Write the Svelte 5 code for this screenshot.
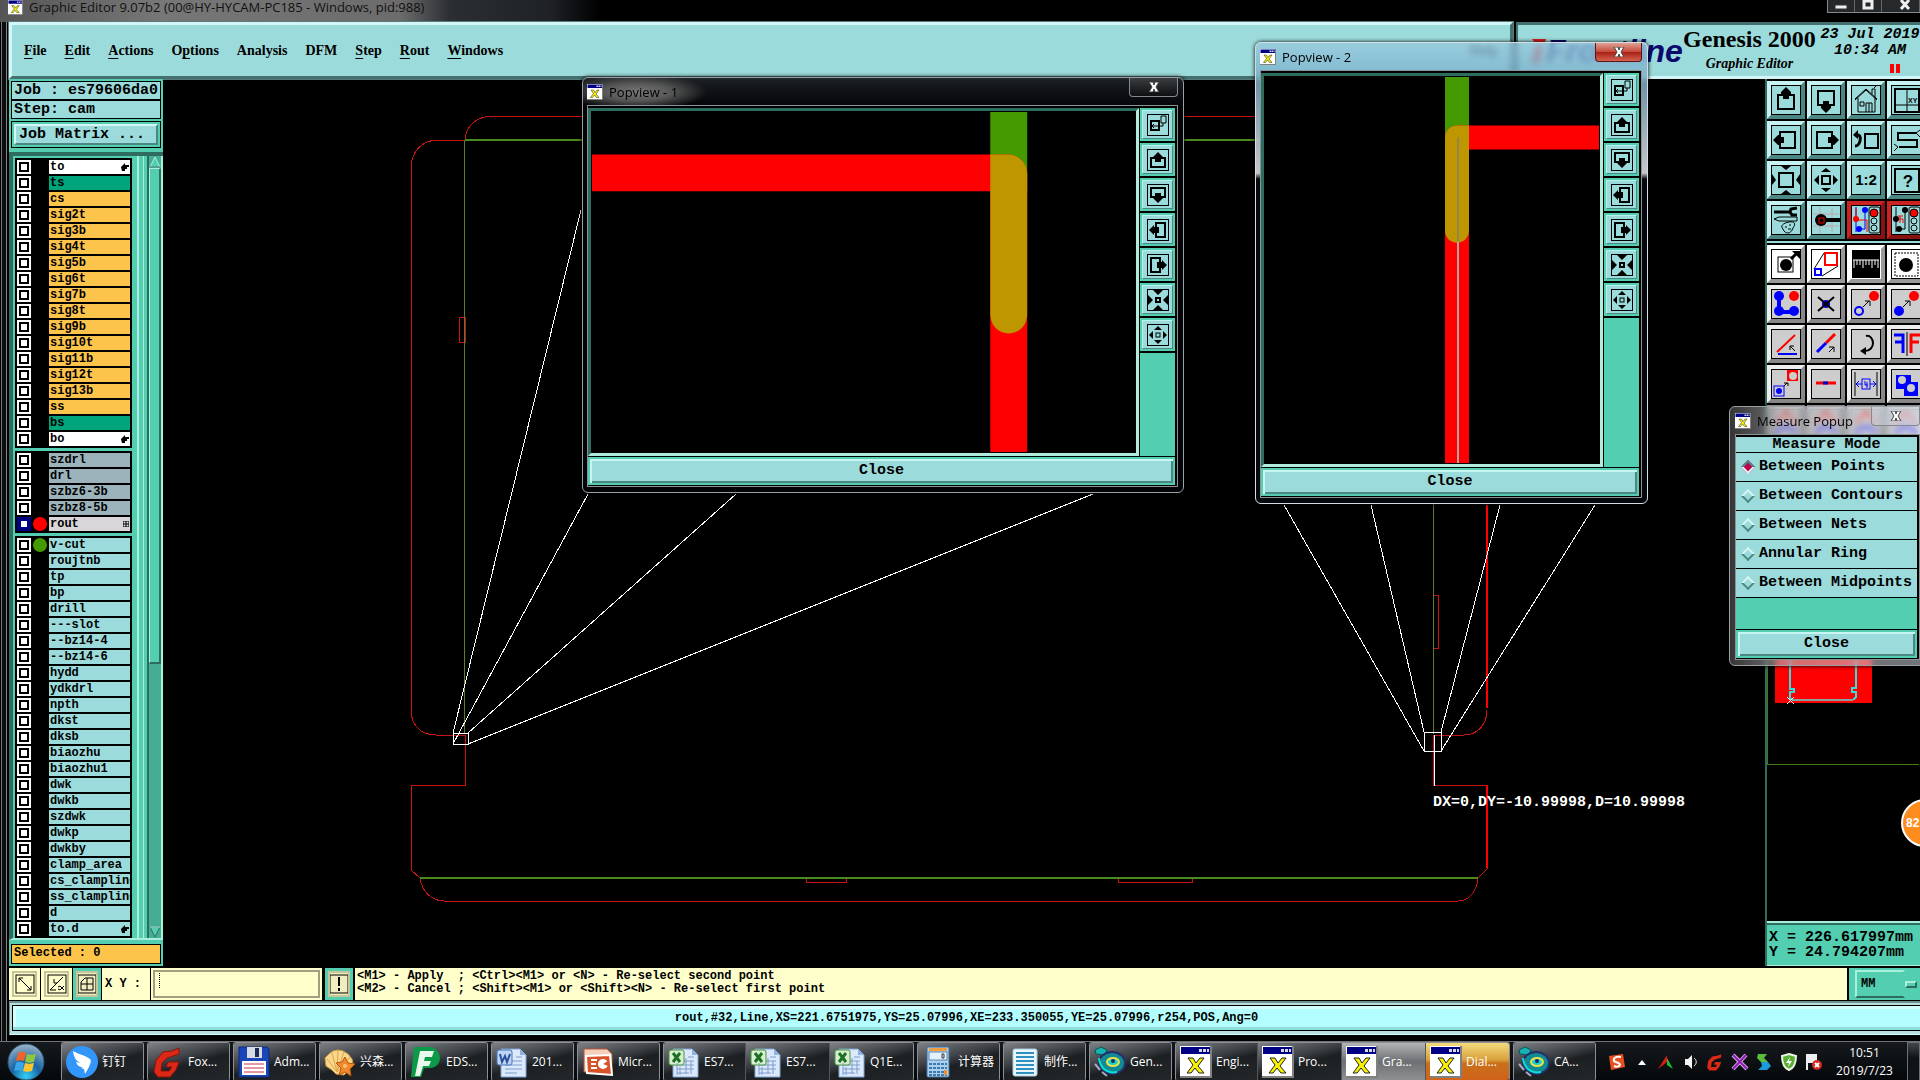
<script>
    let coords = $state('');
    let unit = $state('MM');
    let measureMode = $state('Between Points');

    const menus = [
        ['', 'F', 'ile'],
        ['', 'E', 'dit'],
        ['', 'A', 'ctions'],
        ['O', 'p', 'tions'],
        ['Analysis', '', ''],
        ['DFM', '', ''],
        ['', 'S', 'tep'],
        ['', 'R', 'out'],
        ['', 'W', 'indows']
    ];

    const layer = (kind) => (name) => ({ name, kind });

    const layerGroups = $state([
        [
            { name: 'to', kind: 'silk', mark: 'hand' },
            { name: 'ts', kind: 'mask' },
            ...['cs', 'sig2t', 'sig3b', 'sig4t', 'sig5b', 'sig6t', 'sig7b', 'sig8t', 'sig9b', 'sig10t', 'sig11b', 'sig12t', 'sig13b', 'ss'].map(layer('signal')),
            { name: 'bs', kind: 'mask' },
            { name: 'bo', kind: 'silk', mark: 'hand' }
        ],
        [
            ...['szdrl', 'drl', 'szbz6-3b', 'szbz8-5b'].map(layer('drill')),
            { name: 'rout', kind: 'rout', color: 'red', mark: 'grid', active: true }
        ],
        [
            { name: 'v-cut', kind: 'misc', color: 'green' },
            ...['roujtnb', 'tp', 'bp', 'drill', '---slot', '--bz14-4', '--bz14-6', 'hydd', 'ydkdrl', 'npth', 'dkst', 'dksb', 'biaozhu', 'biaozhu1', 'dwk', 'dwkb', 'szdwk', 'dwkp', 'dwkby', 'clamp_area', 'cs_clampline', 'ss_clampline', 'd'].map(layer('misc')),
            { name: 'to.d', kind: 'misc', mark: 'hand' }
        ]
    ]);

    const viewTools = ['up', 'down', 'home', 'layout', 'left', 'right', 'previous', 'serpent', 'zoomin', 'zoomout', 'scale', 'help', 'setup', 'magnify', 'netsred', 'netsblack'];
    const editTools = ['select', 'resize', 'ruler', 'area', 'net', 'remove', 'copy', 'move', 'angle', 'extend', 'rotate', 'mirror', 'swap', 'segment', 'gap', 'merge', 'arcs', 'arcs', 'arcs', 'arcs'];
    const popTools = ['popview', 'up', 'down', 'left', 'right', 'zoomin', 'zoomout'];

    const measureModes = ['Between Points', 'Between Contours', 'Between Nets', 'Annular Ring', 'Between Midpoints'];

    const tasks = [
        [{ icon: 'ding', text: '钉钉' }],
        [{ icon: 'fox', text: 'Fox...' }],
        [{ icon: 'floppy', text: 'Adm...' }],
        [{ icon: 'shell', text: '兴森...' }],
        [{ icon: 'eds', text: 'EDS...' }],
        [{ icon: 'word', text: '201...' }],
        [{ icon: 'ppt', text: 'Micr...' }],
        [{ icon: 'excel', text: 'ES7...' }, { icon: 'excel', text: 'ES7...' }, { icon: 'excel', text: 'Q1E...' }],
        [{ icon: 'calc', text: '计算器' }],
        [{ icon: 'notes', text: '制作...' }],
        [{ icon: 'gen', text: 'Gen...' }],
        [{ icon: 'x', text: 'Engi...' }, { icon: 'x', text: 'Pro...' }, { icon: 'x', text: 'Gra...', state: 'current' }, { icon: 'x', text: 'Dial...', state: 'alert' }],
        [{ icon: 'gen', text: 'CA...' }]
    ];
</script>

{#snippet xIcon(size)}
    <svg class="x-icon" width={size} height={size} viewBox="0 0 32 32" aria-hidden="true">
        <rect width="32" height="32" fill="#808080" />
        <rect x="0" y="0" width="30" height="30" fill="#fff" />
        <rect x="1" y="1" width="29" height="7" fill="#000084" />
        <path d="M19 3h3v3h-3zM23 3h3v3h-3zM27 3h2v3h-2z" fill="#d8d8e8" />
        <path d="M8 12h5l3 5 4-5h4l-6 8 6 7h-5l-4-5-4 5H7l6-8z" fill="#f7f100" stroke="#222" stroke-width="1" />
    </svg>
{/snippet}

{#snippet toolIcon(kind)}
    <svg width="30" height="30" viewBox="0 0 30 30" fill="none" stroke="#000" stroke-width="2" aria-hidden="true">
        {#if kind === 'up'}
            <rect x="7" y="10" width="16" height="14" />
            <path d="M15 2l5 5v2h-2v5h-6V9h-2V7z" fill="#000" stroke="none" />
        {:else if kind === 'down'}
            <rect x="7" y="6" width="16" height="14" />
            <path d="M15 28l5-5v-2h-2v-5h-6v5h-2v2z" fill="#000" stroke="none" />
        {:else if kind === 'left'}
            <rect x="9" y="7" width="15" height="16" />
            <path d="M2 15l5-5h2v2h4v6H9v2H7z" fill="#000" stroke="none" />
        {:else if kind === 'right'}
            <rect x="6" y="7" width="15" height="16" />
            <path d="M28 15l-5-5h-2v2h-4v6h4v2h2z" fill="#000" stroke="none" />
        {:else if kind === 'home'}
            <path d="M4 15L15 5l11 10M7 13v14h17V13" stroke-width="1" />
            <path d="M4 14L15 4l11 10" stroke-width="1" />
            <path d="M9 17h4v4H9zM15 27v-9h6v9M18 18v9M21 9V4h3v8M23 3l3-3" stroke-width="1" />
        {:else if kind === 'layout'}
            <rect x="4" y="4" width="24" height="23" />
            <path d="M16 4v23M4 20h24" stroke-width="1" />
            <text x="17" y="18" font-size="7" font-family="Liberation Sans" fill="#000" stroke="none">XY</text>
        {:else if kind === 'previous'}
            <rect x="14" y="9" width="13" height="14" />
            <path d="M4 10c5-1 6 2 5 6s-3 5-5 5" stroke-width="3" />
            <path d="M2 10l5-5v9z" fill="#000" stroke="none" />
        {:else if kind === 'serpent'}
            <path d="M25 8H7v7h19v7H8" />
            <path d="M25 8l4-3M25 8l4 4M7 22l-4-3M7 22l-4 4" stroke-width="1" />
        {:else if kind === 'zoomin'}
            <rect x="8" y="8" width="14" height="14" />
            <path d="M10 1h10l-5 4zM10 29h10l-5-4zM1 9v11l4-5zM29 9v11l-4-5z" fill="#000" stroke="none" />
        {:else if kind === 'zoomout'}
            <rect x="11" y="11" width="8" height="8" />
            <path d="M10 7h10l-5-4zM10 23h10l-5 4zM8 10v10l-5-5zM22 10v10l5-5z" fill="#000" stroke="none" />
        {:else if kind === 'scale'}
            <text x="15" y="20" font-size="15" font-weight="bold" font-family="Liberation Sans" text-anchor="middle" fill="#000" stroke="none">1:2</text>
        {:else if kind === 'help'}
            <rect x="4" y="4" width="24" height="23" />
            <text x="17" y="22" font-size="17" font-weight="bold" font-family="Liberation Sans" text-anchor="middle" fill="#000" stroke="none">?</text>
        {:else if kind === 'setup'}
            <path d="M3 7h16M26 3l-6 1-1 3 2 3 5 0" stroke-width="3" />
            <path d="M3 14l5-2h18v4H8zM12 24c-3-3 0-6 6-7s7 2 4 6c-1 3-3 5-5 5s-4-1-5-4zM14 22h2M18 20h2M20 24h-3" stroke-width="1" />
        {:else if kind === 'magnify'}
            <path d="M9 2v26M21 2v26M2 9h26M2 21h26" stroke="#c4a3a8" stroke-width="1" />
            <circle cx="10" cy="15" r="6" fill="#000" stroke="none" />
            <path d="M15 15h14" stroke-width="4" />
            <rect x="8" y="13" width="5" height="5" stroke="#e00" stroke-width="1" />
        {:else if kind === 'netsred' || kind === 'netsblack'}
            <path d="M5 2v25M14 5v19h-5" stroke={kind === 'netsred' ? '#00f' : '#000'} stroke-width="1" />
            <path d={kind === 'netsred' ? 'M5 3v12h11v12' : 'M7 14h5v4M7 11h5M9 11v7'} stroke="red" stroke-width="1" />
            <circle cx="14" cy="5" r="3" fill={kind === 'netsred' ? '#00f' : '#000'} stroke="none" />
            <circle cx="8" cy="24" r="3" fill={kind === 'netsred' ? '#00f' : '#000'} stroke="none" />
            <circle cx="5" cy="14" r="3" fill={kind === 'netsred' ? 'red' : '#000'} stroke="none" />
            <rect x="18" y="2" width="11" height="26" rx="2" stroke-width="1" />
            <circle cx="23" cy="8" r="4" fill="red" stroke-width="1" />
            <circle cx="23" cy="16" r="3" stroke-width="1" />
            <circle cx="23" cy="23" r="3" stroke-width="1" />
        {:else if kind === 'select'}
            <rect x="7" y="8" width="15" height="15" stroke-width="1" />
            <circle cx="15" cy="16" r="6" fill="#000" stroke="none" />
            <path d="M20 10l6-6" stroke-width="3" />
            <path d="M21 2h8v8z" fill="#000" stroke="none" />
        {:else if kind === 'resize'}
            <path d="M3 20L13 4M11 27l16-10M3 20" stroke-width="1" />
            <rect x="14" y="4" width="12" height="12" stroke="red" />
            <rect x="4" y="20" width="6" height="6" stroke="#00f" />
        {:else if kind === 'ruler'}
            <rect x="1" y="1" width="28" height="28" fill="#000" stroke="none" />
            <path d="M3 11v8M6 11v5M9 11v5M12 11v8M15 11v5M18 11v5M21 11v8M24 11v5M27 11v8M2 11h26" stroke="#fff" stroke-width="1" />
        {:else if kind === 'area'}
            <rect x="4" y="4" width="23" height="23" stroke-width="1" stroke-dasharray="2 1" />
            <circle cx="15" cy="16" r="7" fill="#000" stroke="none" />
        {:else if kind === 'net'}
            <path d="M8 7v16h15" stroke="#00f" stroke-width="4" />
            <circle cx="8" cy="7" r="5" fill="#00f" stroke="none" />
            <circle cx="8" cy="22" r="5" fill="#00f" stroke="none" />
            <circle cx="23" cy="22" r="5" fill="#00f" stroke="none" />
            <circle cx="23" cy="7" r="5" fill="red" stroke="none" />
        {:else if kind === 'remove'}
            <circle cx="15" cy="15" r="4" fill="#00c" stroke="none" />
            <path d="M7 8l16 14M23 8L7 22" />
        {:else if kind === 'copy' || kind === 'move'}
            <circle cx="8" cy="22" r="4" fill={kind === 'move' ? '#00f' : 'none'} stroke="#00f" />
            <circle cx="23" cy="7" r="5" fill="red" stroke="none" />
            <path d="M12 18l6-6M14 12h5v5" stroke-width="1" />
        {:else if kind === 'angle'}
            <path d="M6 23L24 6" stroke="red" />
            <path d="M7 25h19" stroke="#00f" />
            <path d="M19 17l5 5M19 21v-4h4" stroke-width="1" />
        {:else if kind === 'extend'}
            <path d="M15 14l9-9" stroke="red" stroke-width="3" />
            <path d="M6 23l9-9" stroke="#00f" stroke-width="3" />
            <path d="M18 23l5-5M18 18h5v5" stroke-width="1" />
        {:else if kind === 'rotate'}
            <path d="M15 7c4-1 7 3 7 7s-3 8-8 8" />
            <path d="M9 22l6-4v8z" fill="#000" stroke="none" />
        {:else if kind === 'mirror'}
            <path d="M16 3v24" stroke-width="1" />
            <path d="M3 6h9v18M4 13h8" stroke="#00f" stroke-width="3" />
            <path d="M29 6h-9v18M28 13h-8" stroke="red" stroke-width="3" />
        {:else if kind === 'swap'}
            <rect x="16" y="1" width="11" height="11" fill="red" stroke="none" />
            <circle cx="22" cy="7" r="4" fill="#ccc" stroke="none" />
            <rect x="3" y="17" width="10" height="10" stroke="#00f" stroke-width="1" />
            <circle cx="8" cy="22" r="3" fill="#00f" stroke="none" />
            <path d="M13 17l3-3M13 14h4v3" stroke-width="1" />
        {:else if kind === 'segment'}
            <path d="M5 14h20" stroke="red" stroke-width="3" />
            <path d="M12 14h5" stroke="#00c" stroke-width="3" />
        {:else if kind === 'gap'}
            <path d="M4 3v24M26 3v24" stroke-width="1" />
            <path d="M5 15h20M8 12l-3 3 3 3M22 12l3 3-3 3" stroke="#00f" stroke-width="1" />
            <rect x="11" y="10" width="8" height="10" fill="#ccc" stroke="#00f" stroke-width="1" />
            <path d="M14 12v4h3M16 13v6" stroke="#00f" stroke-width="1" />
        {:else if kind === 'merge'}
            <path d="M5 6h15v7h7v14H13v-7H5z" fill="#00f" stroke="none" />
            <circle cx="11" cy="11" r="4" fill="#ccc" stroke="none" />
            <circle cx="20" cy="19" r="4" fill="#ccc" stroke="none" />
        {:else if kind === 'arcs'}
            <path d="M5 14l10-11 10 11" stroke="red" stroke-width="3" />
            <path d="M5 24c6-8 14-8 20 0" stroke="#00f" stroke-width="4" />
        {/if}
        {#if kind !== 'ruler'}
            <rect x="0" y="0" width="30" height="30" stroke-width="2" />
        {/if}
    </svg>
{/snippet}

{#snippet popIcon(kind)}
    <svg width="22" height="22" viewBox="0 0 22 22" fill="none" stroke="#000" stroke-width="2" aria-hidden="true">
        {#if kind === 'popview'}
            <rect x="4" y="7" width="8" height="9" />
            <path d="M14 2h5v7h-5zM16 9v3H5M7 10l-2 2 2 2" stroke-width="1" />
        {:else if kind === 'up'}
            <path d="M8 9H4v9h14V9h-4" />
            <path d="M11 3l5 5h-2v5H8V8H6z" fill="#000" stroke="none" />
        {:else if kind === 'down'}
            <path d="M8 13H4V4h14v9h-4" />
            <path d="M11 19l5-5h-2V9H8v5H6z" fill="#000" stroke="none" />
        {:else if kind === 'left'}
            <path d="M9 8V4h9v14H9v-4" />
            <path d="M2 11l5-5v2h5v6H7v2z" fill="#000" stroke="none" />
        {:else if kind === 'right'}
            <path d="M13 8V4H4v14h9v-4" />
            <path d="M20 11l-5-5v2h-5v6h5v2z" fill="#000" stroke="none" />
        {:else if kind === 'zoomin'}
            <rect x="9" y="9" width="4" height="4" />
            <path d="M6 1h10l-5 5zM6 21h10l-5-5zM1 6v10l5-5zM21 6v10l-5-5z" fill="#000" stroke="none" />
        {:else}
            <rect x="9" y="9" width="4" height="4" stroke-width="1" />
            <path d="M7 6h8l-4-4zM7 16h8l-4 4zM6 7v8l-4-4zM16 7v8l4-4z" fill="#000" stroke="none" />
        {/if}
        <rect x="0" y="0" width="22" height="22" />
    </svg>
{/snippet}

{#snippet popTitle(text)}
    <div class="pop-title">
        {@render xIcon(16)}
        <span>{text}</span>
        <button class="pop-x" aria-label="Close window">
            <svg width="12" height="10" viewBox="0 0 12 10" aria-hidden="true">
                <path d="M1 0h4l1 3 1-3h4L8 5l3 5H7L6 7l-1 3H1l3-5z" fill="#fff" stroke="#444" stroke-width="1" />
            </svg>
        </button>
    </div>
{/snippet}

{#snippet popToolbar()}
    <div class="pop-tools">
        {#each popTools as tool}
            <button aria-label={tool}>{@render popIcon(tool)}</button>
        {/each}
    </div>
{/snippet}

{#snippet taskIcon(kind)}
    <svg width="32" height="32" viewBox="0 0 32 32" aria-hidden="true">
        {#if kind === 'ding'}
            <circle cx="16" cy="16" r="16" fill="#3296fa" />
            <path d="M7 5c7 4 12 4 17 8 2 2 0 5-1 8l-4 7-1-5-3-1 2-1c-4 0-6-2-7-5l5 1c-5-2-7-5-8-12z" fill="#fff" />
        {:else if kind === 'fox'}
            <path d="M27 2v6l-12 4-5 5-1 8h8l3-4h-6l2-5h11l-3 8-6 7H6l-4-5 2-12 7-8 9-1z" fill="#dc2817" stroke="#8b130a" />
        {:else if kind === 'floppy'}
            <path d="M1 1h28l2 2v28H1z" fill="#1b46b8" stroke="#0e2a78" />
            <path d="M9 1h15v11H9z" fill="#d6dbe4" />
            <path d="M17 2h4v9h-4z" fill="#1c2c55" />
            <path d="M4 15h24v14H4z" fill="#fff" />
            <path d="M6 18h20M6 22h20M6 26h20" stroke="#c34" />
        {:else if kind === 'shell'}
            <path d="M12 28l-4-4-6-4-1-8 4-4 4-3 5-1 5 1 5 3 4 5 1 5-4 6-5 5z" fill="#f8d88a" stroke="#d49a40" />
            <path d="M13 26L3 13M13 26L8 7M13 26L14 5M13 26L20 6M13 26L26 11" stroke="#e0a34c" />
            <path d="M21 11l3 6 7 1-5 5 1 7-6-4-6 3 2-7-5-5 6-1z" fill="#ef8a2c" stroke="#b9540f" />
            <circle cx="21" cy="20" r="2" fill="#f9c079" />
        {:else if kind === 'eds'}
            <path d="M4 1h17c12 3 12 20-1 21h-6l-3 9H1z" fill="#0b9a48" />
            <path d="M10 5h14l-2 6h-7l-1 4h7l-2 5h-6l-3 10H5z" fill="#e9f8ec" />
        {:else if kind === 'word' || kind === 'excel'}
            <path d="M5 3h19l6 6v22H5z" fill="#dbe9fb" stroke="#7fa4d4" />
            <path d="M24 3v6h6z" fill="#8cb3e4" />
            <path d="M9 15h17M9 19h17M9 23h17M9 27h12M20 11h6" stroke="#7c9cce" />
            <rect x="1" y="4" width="15" height="15" rx="2" fill={kind === 'word' ? '#bfd5f3' : '#d7efd0'} stroke={kind === 'word' ? '#4a74b8' : '#46963b'} />
            {#if kind === 'word'}
                <path d="M4 8l2 8 3-6 2 6 3-8" fill="none" stroke="#274f9e" stroke-width="2" />
            {:else}
                <path d="M5 7l7 9M12 7l-7 9" stroke="#1c7125" stroke-width="3" />
                <path d="M18 12v16M23 15v13M12 21v8M9 17v12" stroke="#7c9cce" />
            {/if}
        {:else if kind === 'ppt'}
            <path d="M2 3h23l5 5v18H2z" fill="#f4cfba" stroke="#b7573a" />
            <path d="M4 10l24-1 2 20-25-2z" fill="#d8532a" stroke="#fff" stroke-width="2" />
            <path d="M9 14h6M9 18h5M9 22h6" stroke="#fff" stroke-width="2" />
            <circle cx="21" cy="18" r="5" fill="#fff" />
            <path d="M21 18l5-3v5z" fill="#d8532a" />
        {:else if kind === 'calc'}
            <rect x="5" y="1" width="22" height="30" rx="1" fill="#a9d0ee" stroke="#456f9b" />
            <rect x="7" y="2" width="18" height="3" fill="#f0a040" />
            <rect x="7" y="6" width="18" height="8" fill="#e4f1fa" stroke="#5b86af" />
            <path d="M7 18h18M7 22h18M7 26h18M7 29h18" stroke="#3f79ad" stroke-width="2" stroke-dasharray="3 1" />
            <path d="M22 24h3v5h-3z" fill="#f0902a" />
            <path d="M20 8h2v4h-2z" fill="none" stroke="#334" />
        {:else if kind === 'notes'}
            <rect x="5" y="3" width="24" height="27" rx="2" fill="#eaf6fb" stroke="#a8cfe2" />
            <path d="M8 7h18M8 11h18M8 15h18M8 19h18M8 23h18M8 27h18" stroke="#2e8fc0" stroke-width="2" />
        {:else if kind === 'gen'}
            <path d="M1 4l6-3 6 3-2 5-9-1z" fill="#17b3b3" stroke="#055" />
            <ellipse cx="18" cy="17" rx="13" ry="11" fill="#138b93" stroke="#23306b" stroke-width="2" />
            <path d="M5 12c1 10 8 16 18 14" fill="none" stroke="#0ee0d8" stroke-width="2" />
            <ellipse cx="19" cy="16" rx="6" ry="4" fill="#19d2cc" stroke="#e9e04c" stroke-width="2" />
            <circle cx="19" cy="15" r="2" fill="#222860" />
            <path d="M1 18l5 6M8 26l5 4" stroke="#aab" stroke-width="2" />
        {/if}
    </svg>
{/snippet}

<div class="screen">
    <header class="titlebar">
        {@render xIcon(15)}
        <h1>Graphic Editor 9.07b2 (00@HY-HYCAM-PC185 - Windows, pid:988)</h1>
        <div class="win-controls">
            <button aria-label="Minimize"><svg width="12" height="12" viewBox="0 0 12 12"><path d="M0 5h12v4H0z" fill="#eee" stroke="#333" /></svg></button>
            <button aria-label="Maximize"><svg width="12" height="12" viewBox="0 0 12 12"><path d="M2 1h8v7H2z" fill="none" stroke="#eee" stroke-width="3" /></svg></button>
            <button aria-label="Close"><svg width="12" height="12" viewBox="0 0 12 12"><path d="M2 0l8 9M10 0L2 9" stroke="#eee" stroke-width="3" /></svg></button>
        </div>
    </header>

    <div class="window">
        <div class="topbar">
            <nav class="menubar">
                {#each menus as [before, key, after]}
                    <button>{before}<u>{key}</u>{after}</button>
                {/each}
                <button class="menu-help">Help</button>
            </nav>
            <div class="brand">
                <div class="logo">
                    <svg width="18" height="26" viewBox="0 0 18 26" aria-hidden="true">
                        <path d="M4 1h14l-1 4H7zM7 8h8l-4 18H3z" fill="#d8201c" />
                    </svg>
                    <span>Frontline</span>
                </div>
                <div class="product">
                    <strong>Genesis 2000</strong>
                    <em>Graphic Editor</em>
                </div>
                <div class="clock">
                    <span>23 Jul 2019</span>
                    <span>10:34 AM</span>
                    <i class="pause"></i>
                </div>
            </div>
        </div>

        <div class="main">
            <aside class="layers">
                <div class="info">Job : es79606da0</div>
                <div class="info">Step: cam</div>
                <div class="matrix"><button>Job Matrix ...</button></div>
                <div class="list">
                    <div class="groups">
                        {#each layerGroups as group}
                            <div class="group">
                                {#each group as item}
                                    <label class="layer">
                                        <input type="checkbox" class:active={item.active} />
                                        <span class="dot {item.color ?? ''}"></span>
                                        <span class="name {item.kind}">
                                            {item.name}
                                            {#if item.mark === 'hand'}
                                                <svg width="8" height="8" viewBox="0 0 8 8"><path d="M0 4l4-4v2h4v2H6v2H4v2H1z" fill="#000" /></svg>
                                            {:else if item.mark === 'grid'}
                                                <svg width="6" height="6" viewBox="0 0 6 6"><path d="M0 0h6v6H0zM3 0v6M0 3h6" fill="none" stroke="#000" /></svg>
                                            {/if}
                                        </span>
                                    </label>
                                {/each}
                            </div>
                        {/each}
                    </div>
                    <div class="edge"></div>
                    <div class="scroll">
                        <svg width="12" height="12" viewBox="0 0 12 12"><path d="M6 1l5 10H1z" fill="#54ceb0" stroke="#a9f0dc" /><path d="M11 11H1" stroke="#2d6c5f" /></svg>
                        <div class="thumb"></div>
                        <svg width="12" height="12" viewBox="0 0 12 12"><path d="M6 11l5-10H1z" fill="#54ceb0" stroke="#2d6c5f" /><path d="M1 1h10" stroke="#a9f0dc" /></svg>
                    </div>
                </div>
                <div class="selected">Selected : 0</div>
            </aside>

            <div class="canvas">
                <svg viewBox="163 79 1602 886" preserveAspectRatio="xMinYMin meet" fill="none" shape-rendering="crispEdges">
                    <g stroke="#c81414">
                        <path d="M465 140C466 124 478 116 494 116H1405C1421 116 1433 126 1433 140" />
                        <path d="M411 168C411 152 422 140 438 140H465" />
                        <path d="M411 168V710C411 724 420 735 436 735H465V785H411V870L420 878C422 892 432 901 444 901H1458C1470 901 1477 890 1478 878L1487 869V785H1433V735" />
                        <path d="M1434 735H1464C1478 735 1487 724 1487 710" />
                        <path d="M459 317h6v25h-6zM1433 595h5v53h-5zM806 878h40v4h-40zM1118 878h74v4h-74z" />
                    </g>
                    <path d="M1487 505V708M1487 785V868" stroke="#f00" stroke-width="2" />
                    <path d="M465 140H1433M420 878H1478" stroke="#4a8a1e" stroke-width="2" />
                    <path d="M464 140V734M1433 140V734" stroke="#5c7a30" />
                    <g stroke="#fff">
                        <path d="M453 733h15v11h-15zM1424 732h17v19h-17zM1434 735v51" />
                        <path d="M581 210L453 733M588 494L453 744M736 494L468 733M1093 494L468 744" />
                        <path d="M1284 505L1424 751M1371 505L1424 732M1500 505L1441 732M1595 505L1441 751" />
                    </g>
                    <text x="1433" y="806">DX=0,DY=-10.99998,D=10.99998</text>
                </svg>
            </div>

            <aside class="tools">
                <div class="tool-grid">
                    {#each viewTools as tool}
                        <button class:red={tool.startsWith('nets')} aria-label={tool}>{@render toolIcon(tool)}</button>
                    {/each}
                </div>
                <div class="tool-grid edit">
                    {#each editTools as tool, i}
                        <button class:white={i < 4} aria-label={tool}>{@render toolIcon(tool)}</button>
                    {/each}
                </div>
                <div class="overview">
                    <svg width="152" height="473" viewBox="1768 448 152 473" fill="none" shape-rendering="crispEdges">
                        <rect x="1776" y="600" width="97" height="103" fill="red" />
                        <path d="M1791 640V689h4v3h-4v6l3 2M1857 640V688h-4v4h4v5l-3 3" stroke="#2fe0e0" stroke-width="2" />
                        <path d="M1794 700h60" stroke="#8aa0a0" stroke-width="2" />
                        <path d="M1788 697l7 7M1795 697l-7 7" stroke="#fff" />
                        <path d="M1768 448V764H1920" stroke="#3f7d14" />
                    </svg>
                </div>
                <div class="readout">
                    <span>X = 226.617997mm</span>
                    <span>Y = 24.794207mm</span>
                </div>
            </aside>
        </div>

        <div class="entry">
            <button class="mini" aria-label="Snap">
                <svg width="20" height="20" viewBox="0 0 20 20" fill="none" stroke="#000"><rect x="1" y="1" width="18" height="18" /><path d="M4 4l12 12M4 8V4h4M16 12v4h-4" /></svg>
            </button>
            <button class="mini" aria-label="Angle">
                <svg width="20" height="20" viewBox="0 0 20 20" fill="none" stroke="#000"><rect x="1" y="1" width="18" height="18" /><path d="M3 16h6M3 16L16 3M7 5v4h3M11 13l2-1 4 4M17 12l-4 4-2-1" /></svg>
            </button>
            <button class="mini on" aria-label="Grid">
                <svg width="20" height="20" viewBox="0 0 20 20" fill="none" stroke="#000"><rect x="1" y="1" width="18" height="18" /><path d="M4 16V8l4-4h8v12zM10 4v12M4 10h12" /></svg>
            </button>
            <label class="xy" for="xy">X Y :</label>
            <input id="xy" type="text" bind:value={coords} />
            <button class="mini on bang" aria-label="Command">
                <svg width="20" height="20" viewBox="0 0 20 20" fill="none" stroke="#000"><rect x="1" y="1" width="18" height="18" /><path d="M10 3v9M10 14v3" stroke-width="2" /></svg>
            </button>
            <div class="hints">
                <span>&lt;M1&gt; - Apply &nbsp;; &lt;Ctrl&gt;&lt;M1&gt; or &lt;N&gt; - Re-select second point</span>
                <span>&lt;M2&gt; - Cancel ; &lt;Shift&gt;&lt;M1&gt; or &lt;Shift&gt;&lt;N&gt; - Re-select first point</span>
            </div>
            <div class="unit">
                <select bind:value={unit} aria-label="Units">
                    <option>MM</option>
                    <option>INCH</option>
                </select>
                <i></i>
            </div>
        </div>

        <div class="status">
            <p>rout,#32,Line,XS=221.6751975,YS=25.07996,XE=233.350055,YE=25.07996,r254,POS,Ang=0</p>
        </div>
    </div>

    <footer class="taskbar">
        <button class="start" aria-label="Start">
            <svg width="38" height="38" viewBox="0 0 38 38">
                <defs>
                    <radialGradient id="orb" cx="50%" cy="90%" r="90%">
                        <stop offset="0" stop-color="#35d0f5" />
                        <stop offset="45%" stop-color="#1763a4" />
                        <stop offset="100%" stop-color="#9db6c8" />
                    </radialGradient>
                </defs>
                <circle cx="19" cy="19" r="18" fill="url(#orb)" stroke="#27506e" />
                <path d="M11 10c3-2 5-1 8 0l-2 8c-3-1-5-1-8 0z" fill="#f0642a" />
                <path d="M20 11c3 1 5 1 9 0l-2 8c-4 1-6 1-9 0z" fill="#8fc63e" />
                <path d="M9 20c3-2 5-1 8 0l-2 8c-3-1-5-1-8 0z" fill="#3aa6ea" />
                <path d="M18 20c3 1 5 1 9 0l-2 8c-4 1-6 1-9 0z" fill="#fbc62e" />
            </svg>
        </button>
        {#each tasks as group}
            <div class="task-group">
                {#each group as task}
                    <button class="task {task.state ?? ''}">
                        {#if task.icon === 'x'}{@render xIcon(32)}{:else}{@render taskIcon(task.icon)}{/if}
                        <span>{task.text}</span>
                    </button>
                {/each}
            </div>
        {/each}
        <div class="tray">
            <svg width="18" height="18" viewBox="0 0 18 18"><path d="M1 3l14-2 2 13-14 3z" fill="#e8501f" /><path d="M13 4c-5-1-8 1-7 4 2 2 6 1 6 4-1 2-4 2-6 1" fill="none" stroke="#fff" stroke-width="2" /></svg>
            <svg width="18" height="18" viewBox="0 0 18 18"><path d="M5 12l4-5 4 5z" fill="#fff" /></svg>
            <svg width="18" height="18" viewBox="0 0 18 18"><path d="M1 16L10 2v7z" fill="#e01818" /><path d="M10 5l6 11-6-4z" fill="#19c52f" /></svg>
            <svg width="18" height="18" viewBox="0 0 18 18"><path d="M3 6h3l4-4v14l-4-4H3z" fill="#f4f4f4" /><path d="M12 5c3 2 3 6 0 8" fill="none" stroke="#ddd" /></svg>
            <svg width="18" height="18" viewBox="0 0 32 32"><path d="M27 2v6l-12 4-5 5-1 8h8l3-4h-6l2-5h11l-3 8-6 7H6l-4-5 2-12 7-8 9-1z" fill="#dc2817" /></svg>
            <svg width="18" height="18" viewBox="0 0 18 18"><path d="M2 2l14 14M15 2L2 16" stroke="#d7a6e8" stroke-width="4" /><path d="M2 2l14 14M15 2L2 16" stroke="#8b1fb0" stroke-width="2" /></svg>
            <svg width="18" height="18" viewBox="0 0 18 18"><path d="M3 1h9l-3 4 4 4H6L2 5z" fill="#5bbf3c" /><path d="M6 9h7l3 4-4 4H3l4-4z" fill="#1d9bd8" /></svg>
            <svg width="18" height="18" viewBox="0 0 18 18"><path d="M9 1l7 2c0 8-2 12-7 14C4 15 2 11 2 3z" fill="#59ad32" stroke="#eaf5e4" stroke-width="2" /><path d="M10 4l-4 6h3l-1 4 4-6H9z" fill="#fff" /></svg>
            <svg width="18" height="18" viewBox="0 0 18 18"><path d="M3 2v15M3 2h9v7H3z" fill="#eee" stroke="#eee" stroke-width="2" /><circle cx="13" cy="12" r="5" fill="#d6281f" /><path d="M11 10l4 4M15 10l-4 4" stroke="#fff" stroke-width="2" /></svg>
        </div>
        <div class="time">
            <span>10:51</span>
            <span>2019/7/23</span>
        </div>
        <button class="peek" aria-label="Show desktop"></button>
    </footer>

    <section class="pop pop-one">
        {@render popTitle('Popview - 1')}
        <div class="client">
            <div class="pop-body">
                <div class="view">
                    <svg viewBox="0 0 546 345" preserveAspectRatio="none">
                        <path d="M400 1h37v80h-37z" fill="#449a00" />
                        <path d="M1 44H418a19 19 0 0 1 19 19V344H400V81H1z" fill="red" />
                        <path d="M400 44h18a19 19 0 0 1 19 19V205a18 19 0 0 1-37 0z" fill="#be9600" />
                    </svg>
                </div>
                {@render popToolbar()}
            </div>
            <button class="close">Close</button>
        </div>
    </section>

    <section class="pop pop-two">
        {@render popTitle('Popview - 2')}
        <div class="client">
            <div class="pop-body">
                <div class="view">
                    <svg viewBox="0 0 336 391" preserveAspectRatio="none">
                        <path d="M181 1h24v80h-24z" fill="#449a00" />
                        <path d="M335 50H193a12 12 0 0 0-12 12V390h24V74h130z" fill="red" />
                        <path d="M205 50h-12a12 12 0 0 0-12 12v94a12 12 0 0 0 24 0z" fill="#be9600" />
                        <path d="M194 62v105" stroke="#66799a" />
                        <path d="M194 167v223" stroke="#b9a3a3" stroke-width="2" />
                    </svg>
                </div>
                {@render popToolbar()}
            </div>
            <button class="close">Close</button>
        </div>
    </section>

    <section class="pop pop-measure">
        {@render popTitle('Measure Popup')}
        <div class="client">
            <fieldset>
                <legend>Measure Mode</legend>
                {#each measureModes as mode}
                    <label><input type="radio" name="mode" value={mode} bind:group={measureMode} />{mode}</label>
                {/each}
            </fieldset>
            <div class="spacer"></div>
            <button class="close">Close</button>
        </div>
    </section>

    <div class="badge">82</div>
</div>

<style>
    :global(body) {
        background: #000;
    }

    * {
        box-sizing: border-box;
    }

    button,
    input,
    select {
        margin: 0;
        padding: 0;
        border: none;
        border-radius: 0;
        background: none;
        color: inherit;
        font: inherit;
    }

    svg {
        display: block;
        flex: none;
    }

    .screen {
        position: relative;
        display: flex;
        flex-direction: column;
        min-height: 100vh;
        overflow: hidden;
        background: #000;
        font: bold 12px/14px "Liberation Mono", monospace;
        color: #000;
    }

    .titlebar {
        display: flex;
        align-items: flex-start;
        gap: 6px;
        height: 22px;
        padding-left: 8px;
        background:
            radial-gradient(ellipse at 120px 18px, #a6c79c 0, transparent 22px),
            radial-gradient(ellipse at 192px 16px, #d9ecf5 0, transparent 24px),
            radial-gradient(ellipse at 268px 17px, #a5e2d8 0, transparent 22px),
            radial-gradient(ellipse at 345px 17px, #d99aa4 0, transparent 20px),
            radial-gradient(ellipse at 500px 15px, #9fbcd6 0, transparent 24px),
            radial-gradient(ellipse at 1255px 18px, #b4dccd 0, transparent 20px),
            linear-gradient(90deg, #555 0, #777 160px, #6c6c6c 400px, #2b2e33 450px, #1e2126 550px, #000 600px);
    }

    .titlebar h1 {
        flex: 1;
        margin: 0;
        font: 13px/14px "Open Sans", sans-serif;
        color: #111;
    }

    .win-controls {
        display: flex;
        height: 13px;
        border: 1px solid #888;
        border-top: none;
        border-right: none;
    }

    .win-controls button {
        display: grid;
        place-items: center;
        width: 27px;
        border-right: 1px solid #666;
        background: #26292c;
    }

    .win-controls button:last-child {
        width: 38px;
        padding-left: 8px;
    }

    .window {
        flex: 1;
        display: flex;
        flex-direction: column;
        padding: 0 0 6px 9px;
        background: linear-gradient(90deg, #000 1px, #777 1px 2px, #0b0d10 2px 6px, #888 6px 7px, #000 7px);
    }

    .topbar {
        display: flex;
        height: 57px;
    }

    .menubar {
        flex: 1;
        display: flex;
        align-items: center;
        gap: 18px;
        padding: 0 12px;
        background: #9cdbdb;
        border: 3px solid;
        border-color: #d4f6f6 #44706f #44706f #d4f6f6;
        outline: 1px solid #567c7c;
        font: bold 14px/16px "Liberation Serif", serif;
    }

    .menubar u {
        text-underline-offset: 3px;
    }

    .menu-help {
        margin-left: auto;
    }

    .brand {
        display: flex;
        width: 404px;
        margin-left: 3px;
        padding-left: 10px;
        overflow: hidden;
        background: #9cdbdb;
        border-top: 3px solid #44706f;
        border-left: 2px solid #44706f;
        border-bottom: 3px solid #d4f6f6;
    }

    .logo {
        display: flex;
        align-items: center;
        width: 156px;
        font: italic bold 32px/32px "Liberation Sans", sans-serif;
        color: #0a0a6e;
    }

    .product {
        display: flex;
        flex-direction: column;
        align-items: center;
        width: 140px;
        padding-top: 1px;
    }

    .product strong {
        font: bold 24px/26px "Liberation Serif", serif;
        white-space: nowrap;
    }

    .product em {
        font: italic bold 14px/24px "Liberation Serif", serif;
    }

    .clock {
        display: flex;
        flex-direction: column;
        align-items: center;
        flex: none;
        width: 104px;
        padding: 2px 0 0 4px;
        font: italic bold 15px/16px "Liberation Mono", monospace;
        white-space: nowrap;
    }

    .clock .pause {
        width: 10px;
        height: 9px;
        margin: 5px 0 0 50px;
        border: solid red;
        border-width: 0 4px;
    }

    .main {
        flex: 1;
        display: flex;
    }

    .layers {
        display: flex;
        flex-direction: column;
        width: 154px;
        padding-top: 2px;
        background: #54ceb0;
    }

    .info {
        height: 19px;
        margin: 0 2px;
        padding-left: 2px;
        border: 1px solid #000;
        background: #9cdbdb;
        font-size: 15px;
        line-height: 18px;
        white-space: nowrap;
    }

    .matrix {
        height: 27px;
        margin: 2px 2px 4px;
        padding: 2px;
        border: 1px solid #000;
    }

    .matrix button {
        width: 100%;
        height: 21px;
        padding-left: 3px;
        border: 2px solid;
        border-color: #d4f6f6 #4c8784 #4c8784 #d4f6f6;
        background: #9cdbdb;
        font-size: 15px;
        line-height: 17px;
        text-align: left;
    }

    .list {
        display: flex;
        border: solid #2d6c5f;
        border-width: 4px 0 0 4px;
        border-bottom: 2px solid #a9f0dc;
    }

    .groups {
        display: flex;
        flex-direction: column;
        gap: 3px;
        width: 121px;
        padding: 2px 2px 0;
    }

    .group {
        padding: 1px 2px;
        background: #000;
    }

    .layer {
        display: flex;
        align-items: center;
        height: 16px;
    }

    .layer input {
        appearance: none;
        width: 14px;
        height: 14px;
        background: #fff;
        border: 2px solid #fff;
        outline: 2px solid #000;
        outline-offset: -4px;
    }

    .layer input.active {
        border-color: #000084;
        outline-color: #000084;
    }

    .dot {
        width: 14px;
        height: 14px;
        margin: 0 2px;
        border-radius: 50%;
    }

    .dot.red {
        background: #f00;
    }

    .dot.green {
        background: #449a00;
    }

    .name {
        flex: 1;
        display: flex;
        align-items: center;
        justify-content: space-between;
        height: 14px;
        min-width: 0;
        padding: 0 1px;
        overflow: hidden;
        white-space: nowrap;
    }

    .silk {
        background: #fff;
    }

    .mask {
        background: #00a57c;
    }

    .signal {
        background: #fdc44c;
    }

    .drill {
        background: #9cb3bb;
    }

    .rout {
        background: #d8d6d8;
    }

    .misc {
        background: #9cdbdb;
    }

    .edge {
        flex: 1;
        border-left: 3px solid #54ceb0;
        background: linear-gradient(90deg, #a9f0dc 2px, #54ceb0 2px 6px, #a9f0dc 6px 7px, #54ceb0 7px);
    }

    .scroll {
        display: flex;
        flex-direction: column;
        width: 16px;
        border-left: 2px solid #2d6c5f;
        border-right: 2px solid #a9f0dc;
        background: #46ad94;
    }

    .thumb {
        flex: 1;
        margin-bottom: 262px;
        background: #54ceb0;
        border: solid;
        border-width: 1px 2px 2px 1px;
        border-color: #a9f0dc #2d6c5f #2d6c5f #a9f0dc;
    }

    .selected {
        height: 20px;
        margin: 4px 2px 1px;
        padding-left: 2px;
        border: 1px solid #000;
        background: #fdc44c;
        line-height: 17px;
    }

    .canvas {
        flex: 1;
        min-width: 0;
    }

    .canvas svg {
        width: 100%;
    }

    .canvas text {
        fill: #fff;
        font-size: 15px;
    }

    .tools {
        display: flex;
        flex-direction: column;
        width: 155px;
        overflow: hidden;
        border-left: 2px solid #2d6c5f;
    }

    .tool-grid {
        display: grid;
        grid-template-columns: repeat(4, 38px);
        gap: 2px;
        padding-top: 2px;
    }

    .tool-grid.edit {
        margin-top: 2px;
        border-top: 2px solid #9cdbdb;
    }

    .tool-grid button {
        height: 38px;
        border: 4px solid;
        border-color: #c6f2f2 #4c8784 #4c8784 #c6f2f2;
        background: #9cdbdb;
    }

    .tool-grid svg {
        overflow: hidden;
    }

    .tool-grid.edit button {
        border-color: #eee #888 #888 #eee;
        background: #cdcdcd;
    }

    .tool-grid.edit .white {
        border-color: #fff #999 #999 #fff;
        background: #fff;
    }

    .tool-grid .red {
        border-color: #c22 #811 #811 #c22;
    }

    .overview {
        flex: 1;
        height: 0;
        padding-top: 5px;
        overflow: hidden;
    }

    .readout {
        display: flex;
        flex-direction: column;
        flex: none;
        height: 45px;
        padding: 7px 0 0 2px;
        border: solid #a9f0dc;
        border-width: 2px 0 1px;
        background: linear-gradient(#2d6c5f 2px, #54ceb0 2px);
        font-size: 15px;
        line-height: 15px;
        white-space: nowrap;
    }

    .entry {
        display: flex;
        gap: 1px;
        height: 35px;
        padding: 2px 0 1px;
    }

    .mini {
        display: grid;
        place-items: center;
        width: 31px;
        border: 3px solid #ffffcc;
        background: #ffffcc;
        outline: 2px solid #c6c69a;
        outline-offset: -5px;
    }

    .mini.on {
        width: 28px;
        border-color: #54ceb0;
        background: #f0eec0;
    }

    .xy {
        width: 48px;
        padding-left: 3px;
        background: #ffffcc;
        line-height: 32px;
    }

    #xy {
        width: 171px;
        padding: 0 4px;
        border: 2px solid #ffffcc;
        outline: 2px solid #a09f80;
        outline-offset: -4px;
        background: repeating-linear-gradient(#000 0 1px, transparent 1px 2px) 6px 3px / 1px 15px no-repeat, #ffffcc;
    }

    .mini.bang {
        margin: 0 1px 0 2px;
    }

    .hints {
        flex: 1;
        display: flex;
        flex-direction: column;
        padding: 2px;
        background: #ffffcc;
        line-height: 13px;
    }

    .unit {
        display: flex;
        align-items: center;
        width: 71px;
        margin-left: 1px;
        padding: 2px 0 2px 6px;
        background: #54ceb0;
    }

    .unit select {
        appearance: none;
        flex: 1;
        height: 28px;
        padding-left: 4px;
        border: 2px solid;
        border-color: #a9f0dc transparent #2d6c5f #a9f0dc;
    }

    .unit i {
        width: 12px;
        height: 7px;
        margin-right: 3px;
        border: 2px solid;
        border-color: #a9f0dc #2d6c5f #2d6c5f #a9f0dc;
    }

    .status {
        height: 34px;
        padding: 2px 0 5px 2px;
        background: #b9dede;
        border-top: 2px solid #6f8f8f;
        border-left: 1px solid #6f8f8f;
        border-bottom: 1px solid #c7ffff;
    }

    .status p {
        height: 26px;
        margin: 0;
        border: 1px solid #000;
        border-right: none;
        background: #b3ffff;
        box-shadow: inset 0 -3px 0 #8fdede, inset 3px 3px 0 #d4ffff;
        line-height: 24px;
        text-align: center;
    }

    .taskbar {
        display: flex;
        gap: 3px;
        height: 40px;
        padding-left: 7px;
        border-top: 1px solid #6f7376;
        background: linear-gradient(#15191d, #05080a);
        font: 12px/18px "Open Sans", "Noto Sans CJK SC", sans-serif;
        color: #fff;
    }

    .start {
        width: 51px;
    }

    .task-group {
        display: flex;
        flex: none;
        border: 1px solid #8c9094;
        border-bottom-color: #66696c;
        border-radius: 3px;
        overflow: hidden;
    }

    .task {
        display: flex;
        align-items: center;
        gap: 4px;
        width: 81px;
        padding-left: 4px;
        overflow: hidden;
        background: linear-gradient(165deg, #7d8084 0, #3b3f43 40%, #1c2023 55%, #23272a 100%);
        white-space: nowrap;
    }

    .task + .task {
        width: 84px;
        border-left: 1px solid #53575a;
    }

    .task.current {
        background: linear-gradient(#b2b4b6, #6e7173 50%, #8d8f91);
    }

    .task.alert {
        background: linear-gradient(#f3dc7c, #d9a13c 45%, #c9701c 55%, #d0621a);
    }

    .tray {
        display: flex;
        align-items: center;
        justify-content: space-between;
        width: 214px;
        margin-left: 9px;
    }

    .time {
        flex: 1;
        display: flex;
        flex-direction: column;
        align-items: center;
        padding-top: 2px;
    }

    .peek {
        width: 13px;
        border: 1px solid #6b7074;
        background: linear-gradient(#42474b, #101417 40%);
    }

    /* floating windows */
    .pop {
        position: absolute;
        display: flex;
        flex-direction: column;
        padding: 0 5px 5px 4px;
        border: 1px solid #9a9fa3;
        border-radius: 6px;
        background: linear-gradient(rgba(30, 34, 38, 0.9), rgba(2, 4, 7, 0.92) 30px);
        backdrop-filter: blur(3px);
        box-shadow: 0 0 4px #000;
    }

    .pop-one {
        left: 582px;
        top: 77px;
        width: 602px;
        height: 416px;
        background:
            radial-gradient(ellipse 70px 18px at 54px 14px, #777 0, #555 50%, transparent 100%),
            linear-gradient(rgba(30, 34, 38, 0.9), rgba(2, 4, 7, 0.92) 30px);
    }

    .pop-two {
        left: 1255px;
        top: 42px;
        width: 393px;
        height: 462px;
        border-color: #d5dde2;
        background: linear-gradient(rgba(150, 200, 222, 0.75), rgba(125, 178, 205, 0.8) 30px, rgba(220, 220, 225, 0.9) 130px, #05080c 136px);
    }

    .pop-measure {
        left: 1729px;
        top: 406px;
        width: 197px;
        padding-left: 5px;
        background: linear-gradient(90deg, rgba(60, 60, 60, 0.9), rgba(180, 180, 185, 0.6) 50px, rgba(225, 232, 240, 0.5));
    }

    .pop-title {
        display: flex;
        flex: none;
        align-items: center;
        gap: 6px;
        height: 27px;
        font: 13px/18px "Open Sans", sans-serif;
        color: #000;
    }

    .pop-title span {
        flex: 1;
    }

    .pop-x {
        display: grid;
        place-items: center;
        align-self: flex-start;
        width: 49px;
        height: 19px;
        border: 1px solid #85898c;
        border-top: none;
        border-radius: 0 0 4px 4px;
        background: linear-gradient(#3b3f42, #0d0f11);
    }

    .pop-two .pop-x {
        width: 47px;
        border-color: #5b1712;
        background: linear-gradient(#e0a093, #c4483a 50%, #a81e14 50%, #d46350);
    }

    .pop-measure .pop-x {
        background: rgba(200, 205, 215, 0.5);
    }

    .client {
        flex: 1;
        display: flex;
        flex-direction: column;
        min-height: 0;
        padding: 2px 2px 1px 0;
        border: 1px solid #8b9396;
        background: #000;
    }

    .pop-body {
        flex: 1;
        display: flex;
        gap: 1px;
        min-height: 0;
    }

    .view {
        flex: 1;
        border: 3px solid;
        border-color: #2d6c5f #b0ecdc #b0ecdc #2d6c5f;
    }

    .view svg {
        width: 100%;
        height: 100%;
    }

    .pop-tools {
        display: flex;
        flex-direction: column;
        gap: 2px;
        width: 35px;
        background: linear-gradient(#000 245px, #54ceb0 245px);
    }

    .pop-tools button {
        display: grid;
        place-items: center;
        flex: none;
        height: 33px;
        border: 3px solid;
        border-color: #b9f3ee #4c8784 #4c8784 #b9f3ee;
        outline: 2px solid #54ceb0;
        outline-offset: -2px;
        background: #9cdbdb;
    }

    .close {
        flex: none;
        height: 28px;
        margin-top: 1px;
        border: 2px solid #54ceb0;
        background: #9cdbdb;
        box-shadow: inset 2px 2px 0 #c6f6f2, inset -2px -2px 0 #4c8784;
        font-size: 15px;
        line-height: 22px;
    }

    fieldset {
        display: flex;
        flex-direction: column;
        gap: 1px;
        min-width: 0;
        margin: 0;
        padding: 0;
        border: none;
        font-size: 15px;
    }

    legend {
        width: 100%;
        padding: 0;
        margin-bottom: 1px;
        background: #9cdbdb;
        line-height: 15px;
        text-align: center;
    }

    fieldset label {
        display: flex;
        align-items: center;
        gap: 6px;
        height: 28px;
        padding-left: 7px;
        background: #9cdbdb;
        white-space: nowrap;
    }

    fieldset input {
        appearance: none;
        width: 10px;
        height: 10px;
        border: 2px solid;
        border-color: #d4f6f6 #4c8784 #4c8784 #d4f6f6;
        transform: rotate(45deg);
    }

    fieldset input:checked {
        border-color: #4c8784 #e6f2f6 #e6f2f6 #4c8784;
        background: #c4004c;
    }

    .spacer {
        height: 31px;
        margin-top: 1px;
        background: #54ceb0;
    }

    .badge {
        position: absolute;
        left: 1901px;
        top: 799px;
        width: 48px;
        height: 48px;
        padding-left: 3px;
        border: 2px solid #fff;
        border-radius: 50%;
        background: #ff8c1e;
        font: bold 12px/44px "Liberation Sans", sans-serif;
        color: #fff;
    }
</style>
